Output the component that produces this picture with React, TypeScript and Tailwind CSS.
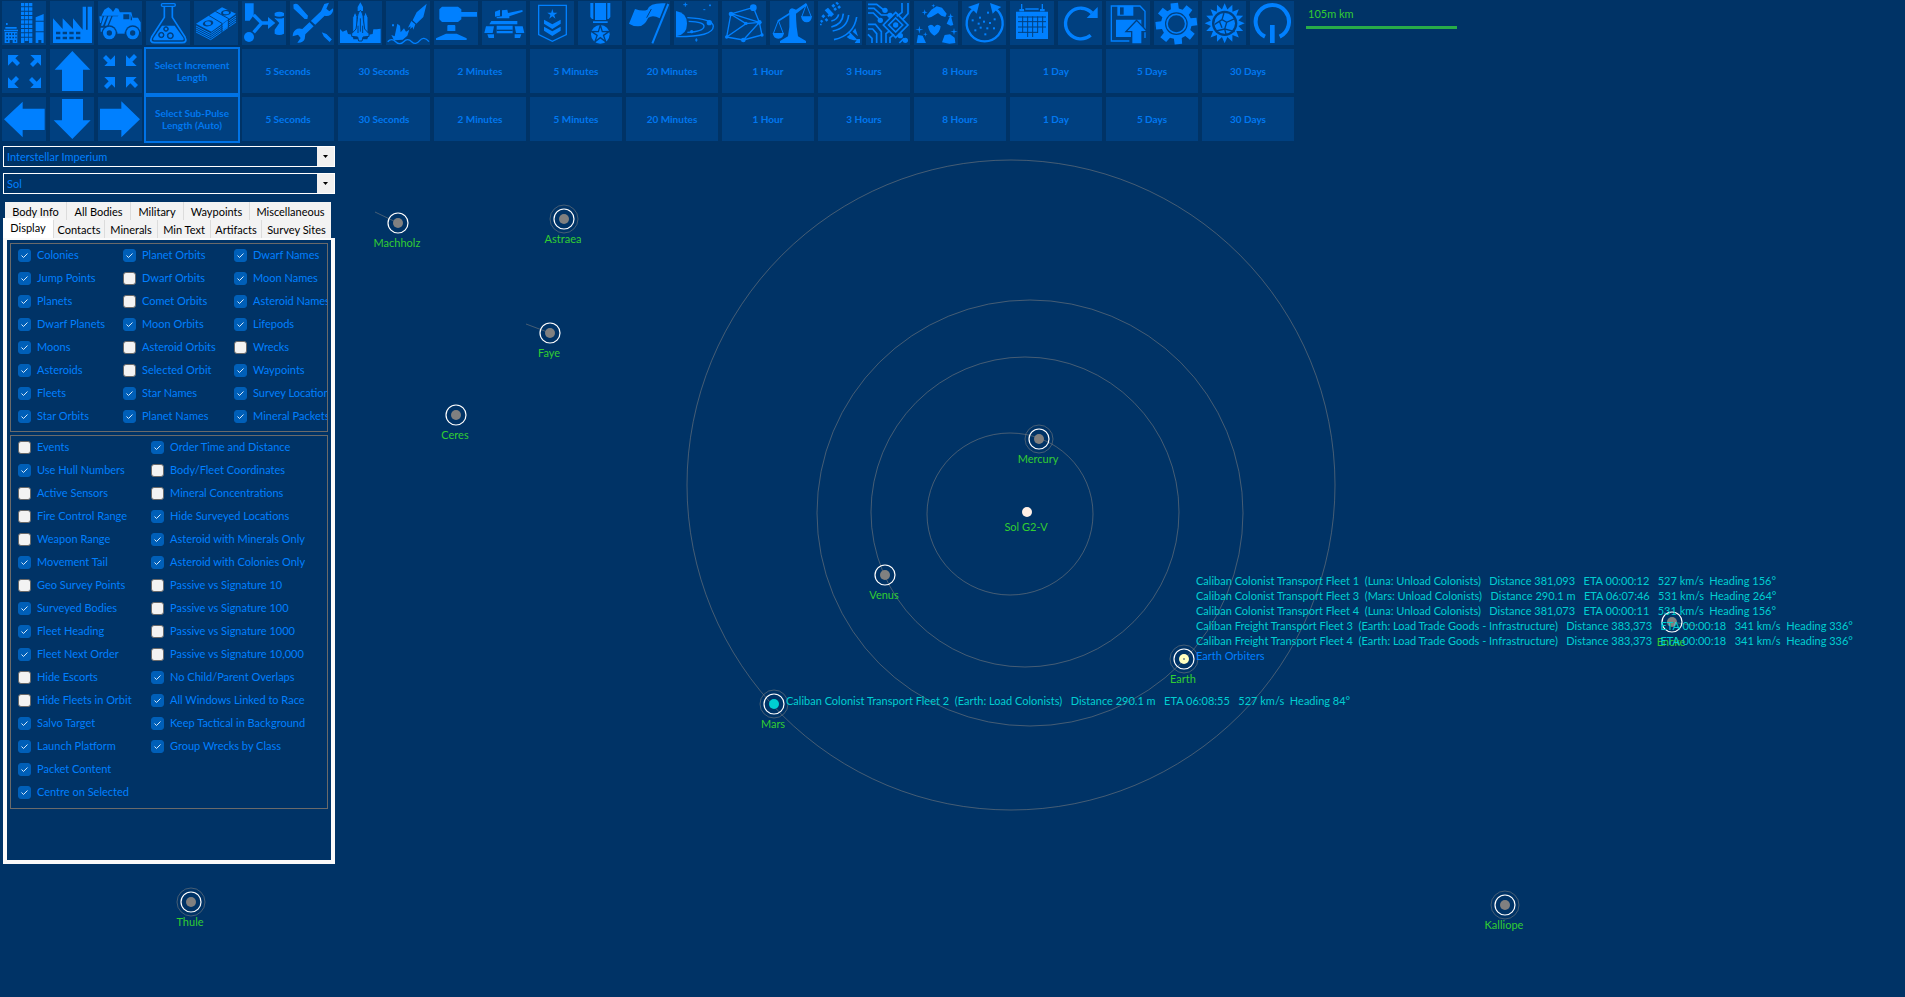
import { useState } from "react";
import type { ReactNode } from "react";

const BACK = "#004080";

function star(cx: number, cy: number, outer: number, inner: number, points: number) {
  const out: string[] = [];
  for (let i = 0; i < points * 2; i++) {
    const r = i % 2 === 0 ? outer : inner;
    const a = (Math.PI * i) / points - Math.PI / 2;
    out.push(`${(cx + r * Math.cos(a)).toFixed(1)},${(cy + r * Math.sin(a)).toFixed(1)}`);
  }
  return out.join(" ");
}

function gear(cx: number, cy: number, outer: number, inner: number, teeth: number) {
  const out: string[] = [];
  const step = (Math.PI * 2) / teeth;
  for (let i = 0; i < teeth; i++) {
    const a = i * step - Math.PI / 2 - 0.1;
    const marks: [number, number][] = [
      [inner, -0.26],
      [outer, -0.18],
      [outer, 0.18],
      [inner, 0.26],
    ];
    for (const [r, d] of marks) {
      out.push(`${(cx + r * Math.cos(a + d)).toFixed(1)},${(cy + r * Math.sin(a + d)).toFixed(1)}`);
    }
  }
  return out.join(" ");
}

function Line({ d, w = 4, c = "currentColor" }: { d: string; w?: number; c?: string }) {
  return <path d={d} fill="none" stroke={c} strokeWidth={w} />;
}

const toolIcons: [string, ReactNode][] = [
  [
    "Colonies",
    <>
      <path d="M12 66h5v6h-5zM10 78h34v5H10zM6 86h42v5H6zM8 93h38v33H32v-9h-9v9H8z" />
      <path fill={BACK} d="M13 97h5v5h-5zM22 97h5v5h-5zM31 97h5v5h-5zM40 97h4v5h-4zM13 107h5v5h-5zM22 107h5v5h-5zM31 107h5v5h-5zM40 107h4v5h-4zM13 117h5v5h-5zM38 117h4v5h-4z" />
      {[0, 1, 2, 3, 4, 5, 6, 7, 8].map((i) => (
        <path key={i} d={`M57 ${6 + i * 13}h10v10H57zM69 ${6 + i * 13}h10v10H69zM81 ${6 + i * 13}h10v10H81z`} />
      ))}
      <path d="M57 119h10v7H57zM81 119h10v7H81zM101 49l24-10v20h-24zM101 62h24v29h-24zM101 94h24v32h-7v-9h-9v9h-8z" />
    </>,
  ],
  [
    "Industry",
    <>
      <path d="M9 126V52l29 32V52l31 32V52l29 34V17h10v69h5V17h13v109z" />
      <path fill={BACK} d="M18 92h13v8H18zM38 92h13v8H38zM58 92h13v8H58zM78 92h13v8H78zM18 107h13v8H18zM38 107h13v8H38zM58 107h13v8H58zM78 107h13v8H78z" />
    </>,
  ],
  [
    "Mining",
    <>
      <path d="M10 44l9-18 12-7 8 6 6 8 8-12 8 2 9 21z" />
      <path d="M4 46h10L9 66H6zM18 46h9L15 74H9zM31 46h9L28 74h-7zM44 46h16l6-12h34l4 16h16l4 8 4 6v28H8V80h22z" />
      <path fill={BACK} d="M76 40h18v15H76zM98 40l4 12v6h-4z" />
      <circle cx="34" cy="96" r="23" fill={BACK} />
      <circle cx="104" cy="96" r="23" fill={BACK} />
      <circle cx="34" cy="96" r="19" />
      <circle cx="104" cy="96" r="19" />
      <circle cx="34" cy="96" r="8" fill={BACK} />
      <circle cx="104" cy="96" r="8" fill={BACK} />
      <path d="M58 88h22v10H58z" />
    </>,
  ],
  [
    "Research",
    <>
      <rect x="46" y="8" width="42" height="8" rx="4" fill="none" stroke="currentColor" strokeWidth="4" />
      <Line w={5} d="M55 17v32L17 108q-8 17 9 17h82q17 0 9-17L79 49V17" />
      <path d="M48 74h38l26 36q4 8-6 8H28q-10 0-5-8z" />
      <g fill={BACK} stroke={BACK} strokeWidth="3">
        <circle cx="46" cy="102" r="8" />
        <circle cx="60" cy="84" r="7" />
        <circle cx="73" cy="104" r="9" />
      </g>
      <circle cx="46" cy="102" r="5" />
      <circle cx="60" cy="84" r="4" />
      <circle cx="73" cy="104" r="6" />
    </>,
  ],
  [
    "Wealth",
    <>
      <path d="M6 68L84 19l42 19-74 54z" />
      {[0, 1, 2, 3].map((i) => (
        <Line key={i} w={3} d={`M6 ${75 + i * 6}l44 23 76-53`} />
      ))}
      <ellipse cx="42" cy="67" rx="16" ry="9" fill={BACK} transform="rotate(-10 42 67)" />
      <ellipse cx="42" cy="67" rx="9" ry="6" />
      <ellipse cx="96" cy="35" rx="15" ry="8" fill={BACK} transform="rotate(-10 96 35)" />
      <ellipse cx="96" cy="35" rx="9" ry="5" />
      <Line w={3} c={BACK} d="M44 43l40 24v30M64 31l40 22v30" />
      <path d="M86 69l15-11v20l-15 12z" />
    </>,
  ],
  [
    "Class Design",
    <>
      <path d="M9 7h26v36l-12 16H9z" />
      <circle cx="21" cy="108" r="15" />
      <Line w={10} d="M35 42l24 24-24 28M58 66h28" />
      <path d="M78 48l22 18-22 18z" />
      <path d="M98 36q14-8 28 0v8q-14 6-28 0zM98 50q14 5 28 0v48q-14 8-28 0V86l14-20-14-14z" />
    </>,
  ],
  [
    "Create Project",
    <>
      <path d="M93 31l10-22 14-4-8 18 9 8 11-9q2 12-7 19-9 6-18 3L46 100l-2 14q-6 13-22 11l10-14-8-10-16 5q0-13 9-20 8-6 20-2z" />
      <path stroke={BACK} strokeWidth="4" d="M8 10q10-8 18 0l30 34-2 11 42 37 14 5 18 18-9 11-19-18-6-12-40-40-12-1L9 24z" />
    </>,
  ],
  [
    "Naval Organization",
    <>
      <path d="M6 126V84l8 8 12-5 4 12 14 2 2 14h42l4-14 12-2 2-14h10l12-2v43z" />
      <path d="M67 4l8 14v12H59V18z" />
      <path stroke={BACK} strokeWidth="3" d="M44 50l7-18 6 14v62H44zM90 50l-7-18-6 14v62h13z" />
      <path stroke={BACK} strokeWidth="3" d="M67 28q9 8 9 28l4 28 13 14v8l-18 2-3 12H62l-3-12-18-2v-8l13-14 4-28q0-20 9-28z" />
      <Line w={3} c={BACK} d="M67 52v40M60 74v22M74 74v22" />
    </>,
  ],
  [
    "Missile Design",
    <>
      <path d="M122 8L92 34 80 58l11 10 21-20zM76 60l12 10-6 16-2-8-8 6 2-8-8 4z" />
      <path d="M18 70h6v6h-6zM34 68l8 6 2 20 10-12 6 10 10-6-6 18-14 12-26 2-8-16 10 4z" />
      <Line w={4} d="M5 122q12-12 24 0t24 0 24 0 24-3 28 3" />
    </>,
  ],
  [
    "Turret Design",
    <path d="M24 17h48l10 8v8h47v14H82v8l-10 8H24l-8-8V25zM43 72h18q3 0 3 3v15H40V75q0-3 3-3zM36 98h32l30 14v5H6v-5z" />,
  ],
  [
    "Ground Forces",
    <>
      <path d="M39 32l15-6v18l-15 3zM60 28l16-2 2 10 43-9 1 5-40 14v6H44v-4l16-2z" />
      <path d="M28 60h78v10H22zM12 76h24l-4 20H7zM44 74h48v23H44zM98 76h24l5 20h-25zM16 100h20v11H20zM98 100h20l-4 11H98z" />
      <path fill={BACK} d="M44 86h48v4H44z" />
    </>,
  ],
  [
    "Commanders",
    <>
      <Line w={4} d="M26 13h83v88l-42 20-41-20z" />
      <polygon points={star(67, 40, 16, 6, 5)} />
      <path d="M42 56l25 14 25-14v12L67 84 42 68zM42 77l25 14 25-14v12l-25 16-25-16z" />
    </>,
  ],
  [
    "Medals",
    <>
      <path d="M51 6h33v51H51zM37 6h9v48h-4l-5-6zM88 6h9v42l-5 6h-4zM45 61h44v5H45z" />
      <circle cx="67" cy="100" r="28" />
      <polygon points={star(67, 100, 28, 10, 5)} fill="none" stroke={BACK} strokeWidth="4" />
    </>,
  ],
  [
    "Race",
    <>
      <path d="M9 68L27 24q24 8 37 2Q72 4 119 7l-18 45q-20-12-34-2-12 26-31 26-15 0-27-8z" />
      <Line w={6} d="M127 9L79 127" />
      <Line w={3} c={BACK} d="M62 50l14-26" />
    </>,
  ],
  [
    "System View",
    <>
      <path d="M6 30q33 5 33 38T6 106z" />
      <Line w={4} d="M40 50q78 4 78 26 0 32-112 31" />
      <Line w={4} d="M44 61q47 2 46 15-2 16-50 18" />
      <circle cx="106" cy="65" r="8" />
      <circle cx="53" cy="92" r="5" />
      <path d="M34 5v12M28 11h12M108 10v6M105 13h6M67 112v10M63 117h8M88 26h6" stroke="currentColor" strokeWidth="3" />
    </>,
  ],
  [
    "Galactic Map",
    <>
      <Line w={4} d="M30 38L92 20M96 24l16 40M28 38l84 26M26 42l-12 66M14 108l58-40 40-4M30 42l42 26M14 108l50 9 56-15-8-38-48 53" />
      <circle cx="94" cy="20" r="10" />
      <circle cx="27" cy="39" r="7" />
      <circle cx="112" cy="64" r="7" />
      <circle cx="72" cy="67" r="5" />
      <circle cx="14" cy="108" r="5" />
      <circle cx="64" cy="117" r="7" />
      <circle cx="120" cy="102" r="5" />
    </>,
  ],
  [
    "Comparison",
    <>
      <path d="M58 38q-4-12 8-16 8 2 12 4l30-20 4 6-34 26q0 18 2 40l4 28 24 14v6H30v-6l24-14 4-28z" />
      <Line w={5} d="M62 36L24 60" />
      <Line w={3} d="M25 58L10 98M25 58l15 40M109 10L95 48M109 10l15 38" />
      <path d="M8 96h34q-2 17-17 17T8 96zM93 46h33q-2 18-16 18T93 46z" />
    </>,
  ],
  [
    "Intelligence",
    <>
      <path d="M20 28l10-8 18 20-9 8zM40 14l6-6 6 6-6 6zM52 6l5-4 6 6-5 4zM58 18l6-5 5 6-6 5zM10 46l6-6 6 6-6 6zM20 56l5-5 6 6-5 5zM6 60l5-4 5 5-5 5zM46 24l6-5 5 6-6 5zM6 68h5v5H6zM28 44l4-4 4 4-4 4z" />
      <Line w={5} d="M62 40q-4 16-22 20M76 38q-2 32-36 40M92 42q-4 40-48 48M116 48q-8 54-68 68" />
      <path d="M92 90l26 26q-18 6-32-8l9-7zM104 92l8-10 8 24zM118 114h8v12h-16z" />
    </>,
  ],
  [
    "Technology",
    <>
      <Line w={5} d="M6 10h26l20 16M6 22h18l22 20h22M6 36h16l18 18M6 70h22l18 22v34M6 84h14l12 14v28M6 100l12 12v14M108 6v28L92 46M126 6v32l-16 18M60 126V98l10-8M72 126v-16l12-10M100 126l14-14" />
      <path d="M89 34l37 38-37 38-37-38z" fill="none" stroke="currentColor" strokeWidth="5" />
      <path d="M89 51l21 21-21 21-21-21z" fill="none" stroke="currentColor" strokeWidth="5" />
      <circle cx="89" cy="72" r="8" />
      <circle cx="57" cy="28" r="8" />
      <circle cx="72" cy="43" r="8" />
      <circle cx="43" cy="58" r="8" />
      <circle cx="103" cy="104" r="8" />
      <circle cx="118" cy="118" r="8" />
    </>,
  ],
  [
    "Survey",
    <>
      <path d="M38 44l14-18 16-10 16 4 14 18-4 10-12-4-10-8-20 12-10 2zM98 68l12-26 8 30-8 2zM42 76q10-10 19 2 9-12 19-2-2 20-19 28-16-8-19-28zM8 126l4-24 14 2 10 22zM84 124l8-22 16-2 14 10 2 16-18 2z" />
      <polygon points={star(32, 34, 9, 3, 4)} />
      <polygon points={star(58, 14, 6, 2, 4)} />
      <polygon points={star(16, 86, 12, 3, 4)} />
      <polygon points={star(120, 92, 11, 3, 4)} />
      <polygon points={star(34, 100, 7, 2, 4)} />
      <polygon points={star(110, 46, 9, 3, 4)} />
    </>,
  ],
  [
    "Sector",
    <>
      <Line w={7} d="M38 22A54 54 0 1 0 98 22" />
      <path d="M18 18l34-12-8 32-10-10zM118 18L84 6l8 32 10-10z" />
      {[
        [78, 35],
        [54, 50],
        [32, 58],
        [66, 62],
        [84, 66],
        [98, 55],
        [56, 80],
        [40, 88],
        [76, 82],
        [96, 82],
        [70, 100],
        [50, 68],
      ].map(([x, y]) => (
        <rect key={`${x}-${y}`} x={x - 3} y={y - 3} width="6" height="6" />
      ))}
    </>,
  ],
  [
    "Events",
    <>
      <path d="M18 32h96v82H18zM33 9h4v22h-4zM95 9h4v22h-4zM28 24h14v7H28zM90 24h14v7H90zM46 22h40v4H46z" />
      <path d="M24 48h84M24 62h84M24 78h84M24 94h60M38 46v50M53 46v62M68 46v62M83 46v50M98 46v50" stroke={BACK} strokeWidth="3" />
    </>,
  ],
  [
    "Refresh",
    <>
      <Line w={10} d="M98 103A46 46 0 1 1 102 36" />
      <path d="M119 18v33H86z" />
    </>,
  ],
  [
    "Save",
    <>
      <Line w={4} d="M70 120H16V15h86l15 16v80" />
      <path d="M34 14h48v30H34zM30 56h76v52H30z" />
      <path fill={BACK} d="M42 19h11v22H42z" />
      <path stroke={BACK} strokeWidth="4" d="M92 58l32 34h-16v37H77V92H60z" />
    </>,
  ],
  [
    "Settings",
    <>
      <polygon points={gear(67, 68, 63, 46, 8)} />
      <circle cx="67" cy="68" r="34" fill={BACK} />
      <circle cx="67" cy="68" r="28" fill="none" stroke="currentColor" strokeWidth="5" />
    </>,
  ],
  [
    "Space Master",
    <>
      <polygon points={star(68, 67, 60, 42, 16)} />
      <circle cx="68" cy="67" r="38" fill={BACK} />
      <circle cx="68" cy="67" r="31" />
      <path d="M66 36l-6 20 14 8 26-12M60 56L38 70M74 64l-6 20 30 8M68 84l-26 6M68 84l4 16M52 60l8 20" stroke={BACK} strokeWidth="4" fill="none" />
    </>,
  ],
  [
    "Automated Turns",
    <>
      <Line w={12} d="M45 107A50 50 0 1 1 89 107" />
      <path d="M60 72h14v54H60z" />
    </>,
  ],
];

const corner = "M0 0h32l-10 10 14 14-9 9-14-14L0 32z";

const navRows: [string, ReactNode][][] = [
  [
    [
      "Zoom In",
      <>
        <path d={corner} transform="translate(18 18)" />
        <path d={corner} transform="translate(117 18) rotate(90)" />
        <path d={corner} transform="translate(117 117) rotate(180)" />
        <path d={corner} transform="translate(18 117) rotate(270)" />
      </>,
    ],
    ["Up", <path d="M67 6l54 56H99v64H36V62H14z" />],
    [
      "Zoom Out",
      <>
        <path d={corner} transform="translate(51 51) rotate(180)" />
        <path d={corner} transform="translate(84 51) rotate(270)" />
        <path d={corner} transform="translate(84 84)" />
        <path d={corner} transform="translate(51 84) rotate(90)" />
      </>,
    ],
  ],
  [
    ["Left", <path d="M6 67l56-53v21h66v64H62v22z" />],
    ["Down", <path d="M67 126L11 70h25V6h63v64h23z" />],
    ["Right", <path d="M126 67L70 13v22H6v64h64v22z" />],
  ],
];

const spans = [
  "5 Seconds",
  "30 Seconds",
  "2 Minutes",
  "5 Minutes",
  "20 Minutes",
  "1 Hour",
  "3 Hours",
  "8 Hours",
  "1 Day",
  "5 Days",
  "30 Days",
];

const timeLabels = ["Select Increment Length", "Select Sub-Pulse Length (Auto)"];

function IconButton({ label, children }: { label: string; children: ReactNode }) {
  return (
    <button type="button" aria-label={label} className="size-11 shrink-0 bg-[#004080] text-[#0080ff] hover:bg-[#004a94]">
      <svg viewBox="0 0 132 132" className="size-11" fill="currentColor" aria-hidden="true">
        {children}
      </svg>
    </button>
  );
}

function Toolbar() {
  return (
    <header className="flex w-max flex-col">
      <div className="flex gap-1 px-0.5 pt-px pb-0.5">
        {toolIcons.map(([label, icon]) => (
          <IconButton key={label} label={label}>
            {icon}
          </IconButton>
        ))}
      </div>
      {navRows.map((row, i) => (
        <div key={timeLabels[i]} className="flex">
          <div className="flex gap-1 p-0.5">
            {row.map(([label, icon]) => (
              <IconButton key={label} label={label}>
                {icon}
              </IconButton>
            ))}
          </div>
          <button
            type="button"
            className="h-12 w-24 border-2 border-[#0073e6] bg-[#004080] px-2 text-[10px] leading-3 font-bold text-[#0078f0]"
          >
            {timeLabels[i]}
          </button>
          <div className="flex gap-1 p-0.5">
            {spans.map((span) => (
              <button
                key={span}
                type="button"
                className="h-11 w-[92px] bg-[#004080] text-[10px] leading-3 font-bold text-[#0078f0] hover:bg-[#004a94]"
              >
                {span}
              </button>
            ))}
          </div>
        </div>
      ))}
    </header>
  );
}

function Picker({ label, options }: { label: string; options: string[] }) {
  return (
    <div className="flex h-[21px] border border-white">
      <div className="grid w-full grid-cols-[1fr_17px]">
        <select
          aria-label={label}
          className="col-span-2 col-start-1 row-start-1 h-[19px] appearance-none px-[3px] pt-px text-[11px] leading-[18px] text-[#0080ff] outline-none"
        >
          {options.map((o) => (
            <option key={o}>{o}</option>
          ))}
        </select>
        <span className="pointer-events-none col-start-2 row-start-1 flex items-center justify-center bg-[#f0f0f0]">
          <svg viewBox="0 0 5 3" className="h-[3px] w-[5px]" aria-hidden="true">
            <path d="M0 0h5L2.500 3z" fill="#000" />
          </svg>
        </span>
      </div>
    </div>
  );
}

const backTabs = ["Body Info", "All Bodies", "Military", "Waypoints", "Miscellaneous"];
const frontTabs = ["Display", "Contacts", "Minerals", "Min Text", "Artifacts", "Survey Sites"];

function Tabs() {
  const [active, setActive] = useState("Display");
  const tab = (name: string) => (
    <button
      key={name}
      type="button"
      role="tab"
      aria-selected={active === name}
      onClick={() => setActive(name)}
      className={
        active === name
          ? "-mt-0.5 -ml-0.5 h-5 bg-white whitespace-nowrap"
          : "h-[18px] border-l border-[#dcdcdc] bg-[#f3f3f3] pt-0.5 whitespace-nowrap first:border-l-0"
      }
    >
      {name}
    </button>
  );
  return (
    <div role="tablist" aria-label="Map options" className="mr-1 ml-0.5 text-[11px] leading-4 text-black">
      <div className="grid grid-cols-[61px_64px_53px_66px_1fr]">{backTabs.map(tab)}</div>
      <div className="grid grid-cols-[48px_51px_53px_53px_51px_1fr]">{frontTabs.map(tab)}</div>
    </div>
  );
}

type Option = [string, boolean];

const displayColumns: Option[][] = [
  [
    ["Colonies", true],
    ["Jump Points", true],
    ["Planets", true],
    ["Dwarf Planets", true],
    ["Moons", true],
    ["Asteroids", true],
    ["Fleets", true],
    ["Star Orbits", true],
  ],
  [
    ["Planet Orbits", true],
    ["Dwarf Orbits", false],
    ["Comet Orbits", false],
    ["Moon Orbits", true],
    ["Asteroid Orbits", false],
    ["Selected Orbit", false],
    ["Star Names", true],
    ["Planet Names", true],
  ],
  [
    ["Dwarf Names", true],
    ["Moon Names", true],
    ["Asteroid Names", true],
    ["Lifepods", true],
    ["Wrecks", false],
    ["Waypoints", true],
    ["Survey Locations", true],
    ["Mineral Packets", true],
  ],
];

const filterColumns: Option[][] = [
  [
    ["Events", false],
    ["Use Hull Numbers", true],
    ["Active Sensors", false],
    ["Fire Control Range", false],
    ["Weapon Range", false],
    ["Movement Tail", true],
    ["Geo Survey Points", false],
    ["Surveyed Bodies", true],
    ["Fleet Heading", true],
    ["Fleet Next Order", true],
    ["Hide Escorts", false],
    ["Hide Fleets in Orbit", false],
    ["Salvo Target", true],
    ["Launch Platform", true],
    ["Packet Content", true],
    ["Centre on Selected", true],
  ],
  [
    ["Order Time and Distance", true],
    ["Body/Fleet Coordinates", false],
    ["Mineral Concentrations", false],
    ["Hide Surveyed Locations", true],
    ["Asteroid with Minerals Only", true],
    ["Asteroid with Colonies Only", true],
    ["Passive vs Signature 10", false],
    ["Passive vs Signature 100", false],
    ["Passive vs Signature 1000", false],
    ["Passive vs Signature 10,000", false],
    ["No Child/Parent Overlaps", true],
    ["All Windows Linked to Race", true],
    ["Keep Tactical in Background", true],
    ["Group Wrecks by Class", true],
  ],
];

function Check({ label, on }: { label: string; on: boolean }) {
  return (
    <label className="flex h-[23px] items-center gap-1.5 text-[11px] whitespace-nowrap text-[#0080ff]">
      <span className="grid shrink-0">
        <input
          type="checkbox"
          defaultChecked={on}
          className="peer col-start-1 row-start-1 size-[13px] appearance-none rounded-[3px] border border-[#6a6a6a] bg-[#f3f3f3] checked:border-[#005fb8] checked:bg-[#005fb8]"
        />
        <svg
          viewBox="0 0 13 13"
          className="pointer-events-none invisible col-start-1 row-start-1 size-[13px] peer-checked:visible"
          aria-hidden="true"
        >
          <path d="M3.500 6.500l2 2 4-4" fill="none" stroke="#d6e8f8" strokeWidth="1" />
        </svg>
      </span>
      {label}
    </label>
  );
}

function CheckGroup({ columns, template }: { columns: Option[][]; template: string }) {
  return (
    <fieldset className={`grid min-w-0 overflow-hidden border border-[#6a6a6a] pl-[7px] ${template}`}>
      {columns.map((column) => (
        <div key={column[0][0]}>
          {column.map(([label, on]) => (
            <Check key={label} label={label} on={on} />
          ))}
        </div>
      ))}
    </fieldset>
  );
}

function SidePanel() {
  return (
    <aside className="relative z-10 mt-[3px] ml-[3px] w-[332px]">
      <div className="flex flex-col gap-1.5">
        <Picker label="Race" options={["Interstellar Imperium"]} />
        <Picker label="System" options={["Sol"]} />
      </div>
      <div className="mt-2">
        <Tabs />
        <div className="flex flex-col gap-[3px] border-4 border-t-2 border-[#fafafa] px-[3px] pt-[3px] pb-[51px]">
          <CheckGroup columns={displayColumns} template="grid-cols-[105px_111px_1fr] pb-[3px]" />
          <CheckGroup columns={filterColumns} template="grid-cols-[133px_1fr] pb-1" />
        </div>
      </div>
    </aside>
  );
}

type Body = {
  name: string;
  x: number;
  y: number;
  fill?: string;
  halo?: boolean;
  tail?: [number, number];
  star?: boolean;
};

const bodies: Body[] = [
  { name: "Machholz", x: 398, y: 223, tail: [375, 212] },
  { name: "Astraea", x: 564, y: 219, halo: true },
  { name: "Faye", x: 550, y: 333, tail: [526, 324] },
  { name: "Ceres", x: 456, y: 415 },
  { name: "Mercury", x: 1039, y: 439, halo: true },
  { name: "Sol G2-V", x: 1027, y: 512, fill: "#fff0e6", star: true },
  { name: "Venus", x: 885, y: 575 },
  { name: "Earth", x: 1184, y: 659, fill: "#ffffc0", halo: true },
  { name: "Mars", x: 774, y: 704, fill: "#00ced1", halo: true },
  { name: "Encke", x: 1672, y: 622, tail: [1697, 626] },
  { name: "Kalliope", x: 1505, y: 905, halo: true },
  { name: "Thule", x: 191, y: 902, halo: true },
];

const orbits = [
  { cx: 1010, cy: 514, rx: 83, ry: 81 },
  { cx: 1025, cy: 512, rx: 154, ry: 155 },
  { cx: 1030, cy: 513, rx: 213, ry: 213 },
  { cx: 1011, cy: 485, rx: 324, ry: 325 },
];

const earthFleets = [
  "Caliban Colonist Transport Fleet 1  (Luna: Unload Colonists)   Distance 381,093   ETA 00:00:12   527 km/s  Heading 156°",
  "Caliban Colonist Transport Fleet 3  (Mars: Unload Colonists)   Distance 290.1 m   ETA 06:07:46   531 km/s  Heading 264°",
  "Caliban Colonist Transport Fleet 4  (Luna: Unload Colonists)   Distance 381,073   ETA 00:00:11   531 km/s  Heading 156°",
  "Caliban Freight Transport Fleet 3  (Earth: Load Trade Goods - Infrastructure)   Distance 383,373   ETA 00:00:18   341 km/s  Heading 336°",
  "Caliban Freight Transport Fleet 4  (Earth: Load Trade Goods - Infrastructure)   Distance 383,373   ETA 00:00:18   341 km/s  Heading 336°",
];

const marsFleet =
  "Caliban Colonist Transport Fleet 2  (Earth: Load Colonists)   Distance 290.1 m   ETA 06:08:55   527 km/s  Heading 84°";

function SystemMap() {
  return (
    <main className="absolute inset-0 overflow-hidden text-[11px] leading-[15px] whitespace-pre">
      <svg className="size-full" aria-hidden="true">
        <g fill="none" stroke="#808080" strokeOpacity="0.55">
          {orbits.map((o) => (
            <ellipse key={o.rx} {...o} />
          ))}
          {bodies.map((b) => b.tail && <path key={b.name} d={`M${b.x} ${b.y}L${b.tail[0]} ${b.tail[1]}`} />)}
          {bodies.map((b) => b.halo && <circle key={b.name} cx={b.x} cy={b.y} r="14" />)}
        </g>
        {bodies.map((b) => (
          <g key={b.name}>
            {!b.star && <circle cx={b.x} cy={b.y} r="10" fill="none" stroke="#fff" strokeWidth="1.2" />}
            <circle cx={b.x} cy={b.y} r="5" fill={b.fill ?? "#808080"} />
            {b.name === "Earth" && <circle cx={b.x} cy={b.y} r="0.8" fill="#003366" />}
          </g>
        ))}
      </svg>
      {bodies.map((b) => (
        <div
          key={b.name}
          className="absolute -translate-x-1/2 text-[#32cd32]"
          style={{ left: b.x - 1, top: b.y + (b.star ? 7 : 12) }}
        >
          {b.name}
        </div>
      ))}
      <div className="absolute top-[573px] left-[1196px] text-[#00ced1]">
        {earthFleets.map((f) => (
          <div key={f}>{f}</div>
        ))}
        <div className="text-[#0080ff]">Earth Orbiters</div>
      </div>
      <div className="absolute top-[693px] left-[786px] text-[#00ced1]">{marsFleet}</div>
      <div className="absolute top-[6px] left-[1306px] w-[151px] border-b-[3px] border-[#28ac48] pb-[5px] pl-0.5 text-[#32cd32]">
        105m km
      </div>
    </main>
  );
}

export default function App() {
  return (
    <div className="relative min-h-screen overflow-hidden bg-[#003366] font-['Lato','Noto_Sans',sans-serif]">
      <SystemMap />
      <div className="relative w-max">
        <Toolbar />
        <SidePanel />
      </div>
    </div>
  );
}
